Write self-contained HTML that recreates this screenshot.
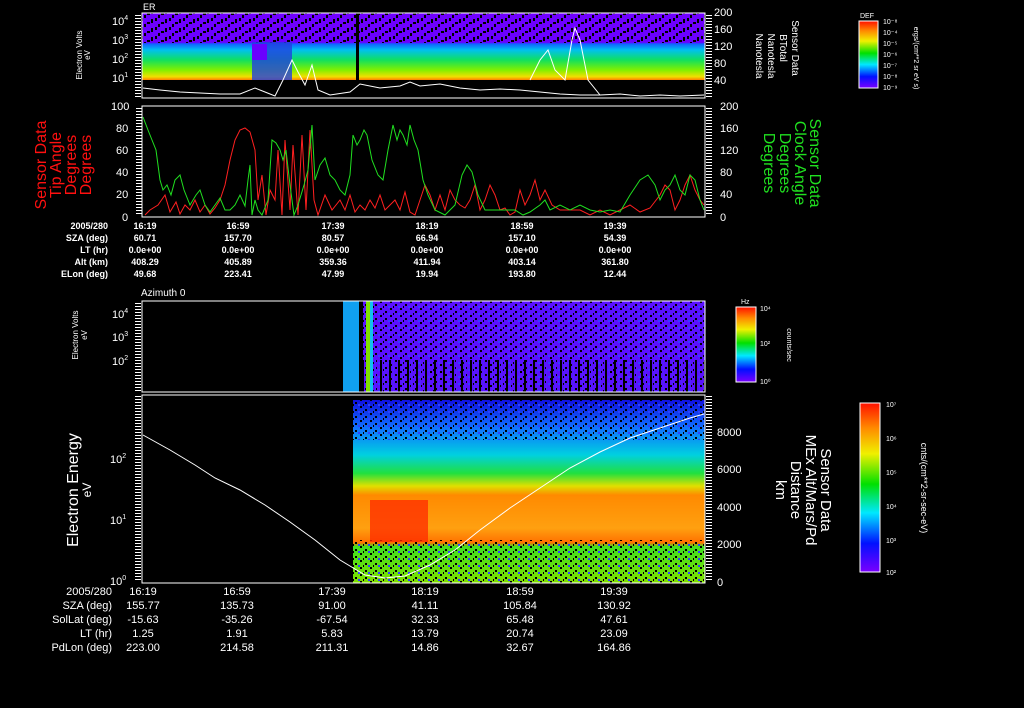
<!DOCTYPE html>
<html><head><meta charset="utf-8"><style>
html,body{margin:0;padding:0;background:#000;}
svg{display:block;font-family:"Liberation Sans",sans-serif;}
</style></head><body>
<svg width="1024" height="708" viewBox="0 0 1024 708" xmlns="http://www.w3.org/2000/svg">
<defs>
<linearGradient id="rb" x1="0" y1="1" x2="0" y2="0">
<stop offset="0" stop-color="#7a00ff"/><stop offset="0.17" stop-color="#0010ff"/>
<stop offset="0.35" stop-color="#00e8ff"/><stop offset="0.52" stop-color="#00e000"/>
<stop offset="0.7" stop-color="#f0f000"/><stop offset="0.85" stop-color="#ff8c00"/>
<stop offset="1" stop-color="#ff1000"/></linearGradient>
<linearGradient id="p1" x1="0" y1="0" x2="0" y2="1">
<stop offset="0" stop-color="#7000ff"/><stop offset="0.44" stop-color="#6a00ff"/>
<stop offset="0.46" stop-color="#1060ff"/><stop offset="0.55" stop-color="#00c0f0"/>
<stop offset="0.7" stop-color="#10e060"/><stop offset="0.85" stop-color="#80f000"/>
<stop offset="0.95" stop-color="#f0e000"/><stop offset="1" stop-color="#ff8000"/></linearGradient>
<linearGradient id="p4" x1="0" y1="0" x2="0" y2="1">
<stop offset="0" stop-color="#1010e0"/><stop offset="0.15" stop-color="#1070ff"/>
<stop offset="0.3" stop-color="#00d0e0"/><stop offset="0.4" stop-color="#20e040"/>
<stop offset="0.47" stop-color="#e0e000"/><stop offset="0.52" stop-color="#ff8a00"/>
<stop offset="0.7" stop-color="#ffa010"/><stop offset="0.78" stop-color="#ff7000"/>
<stop offset="0.8" stop-color="#40e020"/><stop offset="1" stop-color="#80e000"/></linearGradient>
<pattern id="sp" width="14" height="9" patternUnits="userSpaceOnUse">
<rect x="1" y="0" width="2" height="3" fill="#000"/><rect x="7" y="4" width="3" height="2" fill="#000"/>
<rect x="11" y="1" width="2" height="4" fill="#000"/><rect x="4" y="6" width="2" height="3" fill="#000"/></pattern>
<pattern id="sp2" width="10" height="7" patternUnits="userSpaceOnUse">
<rect x="0" y="0" width="2" height="2" fill="#000"/><rect x="5" y="3" width="2" height="2" fill="#000"/>
<rect x="8" y="5" width="2" height="2" fill="#3040ff"/><rect x="3" y="5" width="1" height="2" fill="#000"/></pattern>
<pattern id="vs" width="9" height="10" patternUnits="userSpaceOnUse">
<rect x="2" y="0" width="2" height="10" fill="#000"/><rect x="6" y="0" width="1" height="10" fill="#5020ff"/></pattern>
<pattern id="tk" width="3" height="3" patternUnits="userSpaceOnUse"><rect width="3" height="1" fill="#fff"/></pattern>
</defs>

<!-- Panel 1 -->
<text x="143" y="10" fill="#fff" font-size="9">ER</text>
<rect x="142" y="13" width="563" height="67" fill="url(#p1)"/>
<rect x="142" y="13" width="563" height="30" fill="url(#sp)"/>
<rect x="252" y="42" width="40" height="38" fill="#2040e0" opacity="0.8"/>
<rect x="252" y="44" width="15" height="16" fill="#6a00ff"/>
<rect x="356" y="13" width="3" height="67" fill="#000"/>
<rect x="142" y="13" width="563" height="85" fill="none" stroke="#fff"/>
<rect x="135" y="14" width="6" height="83" fill="url(#tk)"/>
<rect x="706" y="14" width="6" height="83" fill="url(#tk)"/>
<polyline fill="none" stroke="#fff" stroke-width="1" points="143,88 160,90 180,92 200,93 220,94 240,94 255,88 265,92 275,96 283,80 292,60 298,72 305,85 312,65 318,90 330,95 350,92 360,84 380,88 400,86 410,82 420,86 440,84 460,88 480,90 500,89 520,90 540,92 560,94 580,95 600,95 620,94 640,96 660,95 680,96 704,95"/>
<polyline fill="none" stroke="#fff" points="530,80 540,60 548,50 555,70 565,80 572,40 575,28 580,40 588,80 600,95"/>
<g fill="#fff" font-size="11">
<text x="112" y="25">10<tspan font-size="7" dy="-5">4</tspan></text>
<text x="112" y="44">10<tspan font-size="7" dy="-5">3</tspan></text>
<text x="112" y="63">10<tspan font-size="7" dy="-5">2</tspan></text>
<text x="112" y="82">10<tspan font-size="7" dy="-5">1</tspan></text>
<text x="714" y="16">200</text><text x="714" y="33">160</text><text x="714" y="50">120</text><text x="714" y="67">80</text><text x="714" y="84">40</text>
</g>
<text transform="translate(82,55) rotate(-90)" fill="#fff" font-size="8" text-anchor="middle">Electron Volts</text>
<text transform="translate(90,55) rotate(-90)" fill="#fff" font-size="8" text-anchor="middle">eV</text>
<g fill="#fff" font-size="10" text-anchor="middle">
<text transform="translate(792,48) rotate(90)">Sensor Data</text>
<text transform="translate(780,48) rotate(90)">BTotal</text>
<text transform="translate(768,56) rotate(90)">Nanotesla</text>
<text transform="translate(756,56) rotate(90)">Nanotesla</text>
</g>
<text x="860" y="18" fill="#fff" font-size="7">DEF</text>
<rect x="859" y="21" width="19" height="67" fill="url(#rb)" stroke="#fff"/>
<g fill="#fff" font-size="7"><text x="883" y="24">10⁻⁸</text><text x="883" y="35">10⁻⁴</text><text x="883" y="46">10⁻⁵</text><text x="883" y="57">10⁻⁶</text><text x="883" y="68">10⁻⁷</text><text x="883" y="79">10⁻⁸</text><text x="883" y="90">10⁻⁹</text></g>
<text transform="translate(914,58) rotate(90)" fill="#fff" font-size="7" text-anchor="middle">ergs/(cm**2 sr eV s)</text>

<!-- Panel 2 -->
<rect x="142" y="106" width="563" height="111" fill="none" stroke="#fff"/>
<rect x="136" y="107" width="6" height="109" fill="url(#tk)"/>
<rect x="706" y="107" width="6" height="109" fill="url(#tk)"/>
<g fill="#fff" font-size="11">
<text x="111" y="110">100</text><text x="116" y="132">80</text><text x="116" y="154">60</text><text x="116" y="176">40</text><text x="116" y="198">20</text><text x="122" y="221">0</text>
<text x="720" y="110">200</text><text x="720" y="132">160</text><text x="720" y="154">120</text><text x="720" y="176">80</text><text x="720" y="198">40</text><text x="720" y="221">0</text>
</g>
<polyline fill="none" stroke="#ff2020" points="145,215 150,210 158,205 165,195 170,212 176,202 180,214 185,205 190,210 195,200 200,212 205,205 210,214 215,208 220,200 225,185 230,160 235,140 240,130 245,128 250,132 255,150 258,200 262,175 266,215 270,190 275,200 278,150 282,215 285,140 290,210 293,145 298,215 302,135 306,210 310,130 314,200 318,215 325,195 332,210 340,200 345,210 350,195 355,212 360,205 365,210 370,200 375,208 380,195 385,210 390,205 395,200 400,210 405,192 410,212 415,215 420,200 425,185 430,195 435,210 440,195 445,210 450,190 455,200 460,205 465,208 470,200 475,185 480,210 485,200 490,185 495,195 500,210 505,208 510,215 515,212 520,190 525,205 530,195 535,180 540,200 545,190 552,205 560,210 570,210 580,210 590,215 600,210 610,215 620,210 630,205 640,212 650,208 660,195 665,185 670,190 675,210 680,200 685,185 690,175 695,190 700,200 704,205"/>
<polyline fill="none" stroke="#20e020" points="143,117 148,130 152,140 156,150 160,180 163,190 167,185 171,195 175,180 180,175 184,190 190,205 196,195 200,190 205,205 210,212 215,205 220,198 225,210 230,210 235,205 240,195 245,206 248,180 250,165 252,215 255,200 258,210 262,215 268,200 272,140 276,143 280,150 283,160 286,150 290,185 294,215 298,205 304,185 308,170 312,125 315,180 320,165 325,158 330,175 335,180 340,190 345,195 350,175 353,135 357,145 360,140 364,130 367,135 372,160 378,175 383,180 388,150 393,125 397,140 400,130 403,135 407,145 410,125 414,140 418,150 423,180 428,195 435,210 445,215 455,205 462,175 467,165 472,172 478,195 485,210 495,210 505,210 515,210 523,215 530,212 540,205 545,200 550,210 560,205 570,210 580,205 590,210 600,212 610,210 620,212 630,195 640,180 648,175 655,185 660,200 665,190 670,185 675,175 680,190 685,195 690,175 695,180 700,200 704,210"/>
<g fill="#ff1010" font-size="16" text-anchor="middle">
<text transform="translate(46,165) rotate(-90)">Sensor Data</text>
<text transform="translate(61,165) rotate(-90)">Tip Angle</text>
<text transform="translate(76,165) rotate(-90)">Degrees</text>
<text transform="translate(91,165) rotate(-90)">Degrees</text>
</g>
<g fill="#20e020" font-size="16" text-anchor="middle">
<text transform="translate(810,163) rotate(90)">Sensor Data</text>
<text transform="translate(795,163) rotate(90)">Clock Angle</text>
<text transform="translate(780,163) rotate(90)">Degrees</text>
<text transform="translate(764,163) rotate(90)">Degrees</text>
</g>
<g fill="#fff" font-size="9" font-weight="bold">
<g text-anchor="end"><text x="108" y="229">2005/280</text><text x="108" y="241">SZA (deg)</text><text x="108" y="253">LT (hr)</text><text x="108" y="265">Alt (km)</text><text x="108" y="277">ELon (deg)</text></g>
<g text-anchor="middle">
<text x="145" y="229">16:19</text><text x="145" y="241">60.71</text><text x="145" y="253">0.0e+00</text><text x="145" y="265">408.29</text><text x="145" y="277">49.68</text>
<text x="238" y="229">16:59</text><text x="238" y="241">157.70</text><text x="238" y="253">0.0e+00</text><text x="238" y="265">405.89</text><text x="238" y="277">223.41</text>
<text x="333" y="229">17:39</text><text x="333" y="241">80.57</text><text x="333" y="253">0.0e+00</text><text x="333" y="265">359.36</text><text x="333" y="277">47.99</text>
<text x="427" y="229">18:19</text><text x="427" y="241">66.94</text><text x="427" y="253">0.0e+00</text><text x="427" y="265">411.94</text><text x="427" y="277">19.94</text>
<text x="522" y="229">18:59</text><text x="522" y="241">157.10</text><text x="522" y="253">0.0e+00</text><text x="522" y="265">403.14</text><text x="522" y="277">193.80</text>
<text x="615" y="229">19:39</text><text x="615" y="241">54.39</text><text x="615" y="253">0.0e+00</text><text x="615" y="265">361.80</text><text x="615" y="277">12.44</text>
</g></g>

<!-- Panel 3 -->
<text x="141" y="296" fill="#fff" font-size="10">Azimuth 0</text>
<rect x="343" y="301" width="362" height="91" fill="#5a10ff"/>
<rect x="343" y="301" width="362" height="91" fill="url(#sp2)"/>
<rect x="343" y="360" width="362" height="32" fill="url(#vs)"/>
<rect x="343" y="301" width="16" height="91" fill="#10a0f0"/>
<rect x="359" y="301" width="4" height="91" fill="#000"/>
<rect x="366" y="301" width="4" height="91" fill="#80e000"/>
<rect x="370" y="301" width="3" height="91" fill="#10c0f0"/>
<rect x="142" y="301" width="563" height="91" fill="none" stroke="#fff"/>
<rect x="135" y="302" width="6" height="89" fill="url(#tk)"/>
<g fill="#fff" font-size="11">
<text x="112" y="318">10<tspan font-size="7" dy="-5">4</tspan></text>
<text x="112" y="341">10<tspan font-size="7" dy="-5">3</tspan></text>
<text x="112" y="365">10<tspan font-size="7" dy="-5">2</tspan></text>
</g>
<text transform="translate(78,335) rotate(-90)" fill="#fff" font-size="8" text-anchor="middle">Electron Volts</text>
<text transform="translate(87,335) rotate(-90)" fill="#fff" font-size="8" text-anchor="middle">eV</text>
<text x="741" y="304" fill="#fff" font-size="7">Hz</text>
<rect x="736" y="307" width="20" height="75" fill="url(#rb)" stroke="#fff"/>
<g fill="#fff" font-size="7"><text x="760" y="311">10⁴</text><text x="760" y="346">10²</text><text x="760" y="384">10⁰</text></g>
<text transform="translate(787,345) rotate(90)" fill="#fff" font-size="7" text-anchor="middle">counts/sec</text>

<!-- Panel 4 -->
<rect x="353" y="400" width="352" height="183" fill="url(#p4)"/>
<rect x="353" y="400" width="352" height="40" fill="url(#sp2)"/>
<rect x="353" y="540" width="352" height="43" fill="url(#sp2)"/>
<rect x="370" y="500" width="58" height="42" fill="#ff2a00" opacity="0.75"/>
<rect x="142" y="395" width="563" height="188" fill="none" stroke="#fff"/>
<rect x="135" y="396" width="6" height="186" fill="url(#tk)"/>
<rect x="706" y="396" width="6" height="186" fill="url(#tk)"/>
<polyline fill="none" stroke="#fff" points="143,435 170,450 195,465 215,478 240,490 265,505 290,522 315,540 340,560 365,575 385,578 405,576 430,565 455,550 480,530 510,508 540,488 570,468 600,452 630,438 660,428 690,418 704,414"/>
<g fill="#fff" font-size="11">
<text x="110" y="463">10<tspan font-size="7" dy="-5">2</tspan></text>
<text x="110" y="524">10<tspan font-size="7" dy="-5">1</tspan></text>
<text x="110" y="585">10<tspan font-size="7" dy="-5">0</tspan></text>
<text x="717" y="436">8000</text><text x="717" y="473">6000</text><text x="717" y="511">4000</text><text x="717" y="548">2000</text><text x="717" y="586">0</text>
</g>
<text transform="translate(78,490) rotate(-90)" fill="#fff" font-size="16" text-anchor="middle">Electron Energy</text>
<text transform="translate(91,490) rotate(-90)" fill="#fff" font-size="12" text-anchor="middle">eV</text>
<g fill="#fff" font-size="15" text-anchor="middle">
<text transform="translate(821,490) rotate(90)">Sensor Data</text>
<text transform="translate(806,490) rotate(90)">MEx Alt/Mars/Pd</text>
<text transform="translate(791,490) rotate(90)">Distance</text>
<text transform="translate(776,490) rotate(90)">km</text>
</g>
<rect x="860" y="403" width="20" height="169" fill="url(#rb)" stroke="#fff"/>
<g fill="#fff" font-size="7"><text x="886" y="407">10⁷</text><text x="886" y="441">10⁶</text><text x="886" y="475">10⁵</text><text x="886" y="509">10⁴</text><text x="886" y="543">10³</text><text x="886" y="575">10²</text></g>
<text transform="translate(921,488) rotate(90)" fill="#fff" font-size="9" text-anchor="middle">cnts/(cm**2-sr-sec-eV)</text>
<g fill="#fff" font-size="11">
<g text-anchor="end"><text x="112" y="595">2005/280</text><text x="112" y="609">SZA (deg)</text><text x="112" y="623">SolLat (deg)</text><text x="112" y="637">LT (hr)</text><text x="112" y="651">PdLon (deg)</text></g>
<g text-anchor="middle">
<text x="143" y="595">16:19</text><text x="143" y="609">155.77</text><text x="143" y="623">-15.63</text><text x="143" y="637">1.25</text><text x="143" y="651">223.00</text>
<text x="237" y="595">16:59</text><text x="237" y="609">135.73</text><text x="237" y="623">-35.26</text><text x="237" y="637">1.91</text><text x="237" y="651">214.58</text>
<text x="332" y="595">17:39</text><text x="332" y="609">91.00</text><text x="332" y="623">-67.54</text><text x="332" y="637">5.83</text><text x="332" y="651">211.31</text>
<text x="425" y="595">18:19</text><text x="425" y="609">41.11</text><text x="425" y="623">32.33</text><text x="425" y="637">13.79</text><text x="425" y="651">14.86</text>
<text x="520" y="595">18:59</text><text x="520" y="609">105.84</text><text x="520" y="623">65.48</text><text x="520" y="637">20.74</text><text x="520" y="651">32.67</text>
<text x="614" y="595">19:39</text><text x="614" y="609">130.92</text><text x="614" y="623">47.61</text><text x="614" y="637">23.09</text><text x="614" y="651">164.86</text>
</g></g>
</svg>
</body></html>
